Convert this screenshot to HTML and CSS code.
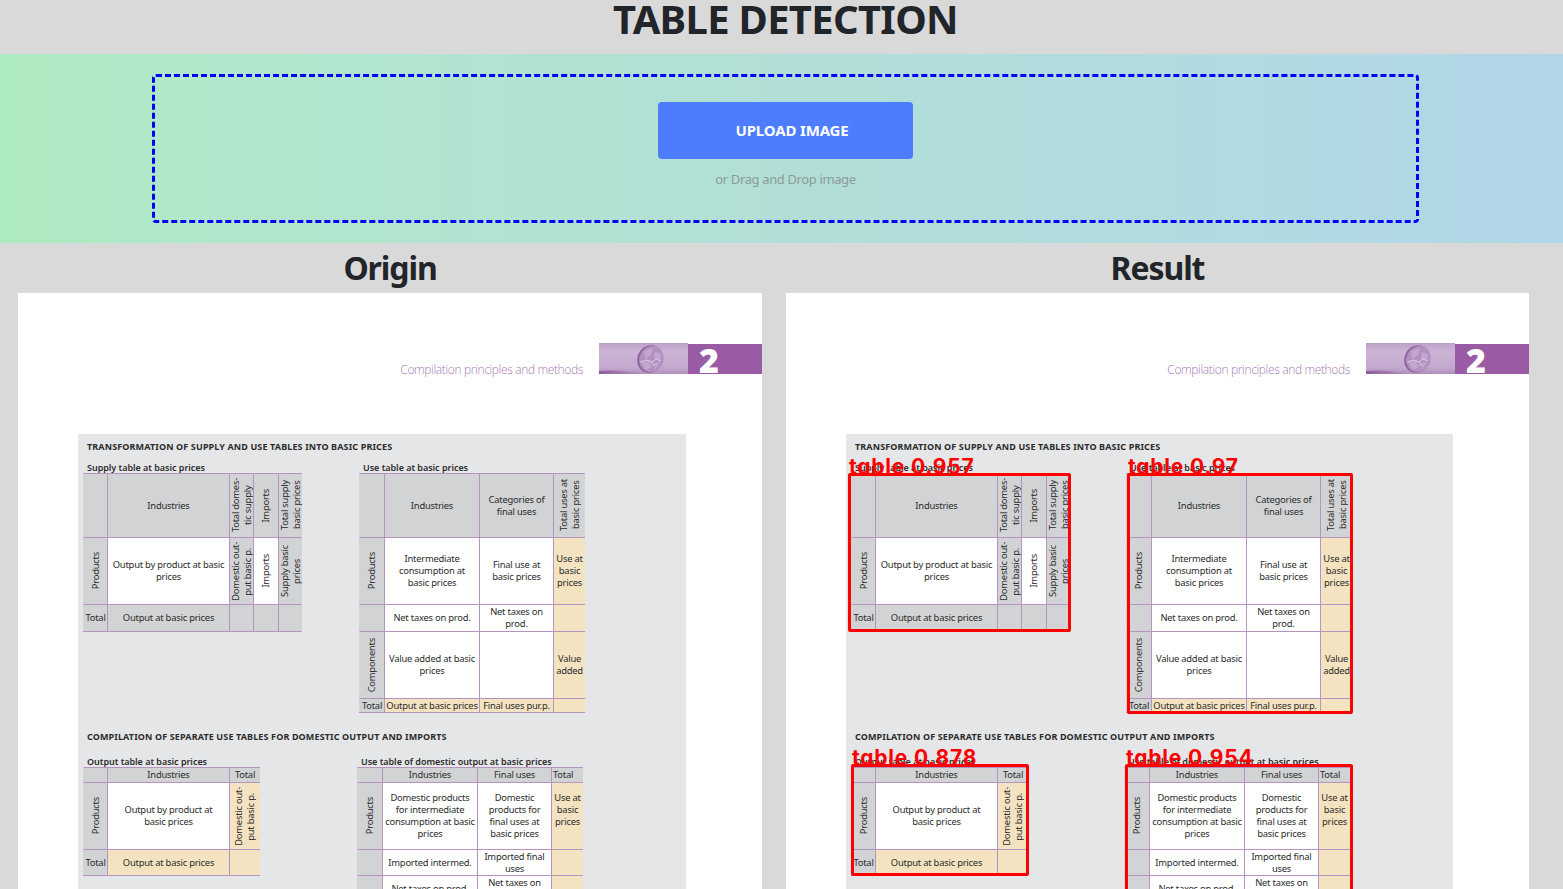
FILE: index.html
```html
<!DOCTYPE html>
<html lang="en">
<head>
<meta charset="utf-8">
<title>Table Detection</title>
<link rel="stylesheet" href="styles.css">
</head>
<body>
<h1 class="title">TABLE DETECTION</h1>
<section class="band">
  <div class="dropzone">
    <button class="upload" type="button">UPLOAD IMAGE</button>
    <p class="hint">or Drag and Drop image</p>
  </div>
</section>
<main class="panes">
  <section class="pane">
    <h2 class="pane-title">Origin</h2>
    <article class="sheet" id="origin">
      <header class="sheet-head">
        <span class="chapter">Compilation principles and methods</span>
        <svg class="coin" width="89" height="31" viewBox="0 0 89 31">
          <defs>
            <linearGradient id="bg" x1="0" y1="0" x2="0" y2="1"><stop offset="0" stop-color="#bda2c8"/><stop offset=".3" stop-color="#cbb5d5"/><stop offset=".8" stop-color="#c3a8ce"/><stop offset="1" stop-color="#b08fbd"/></linearGradient>
            <linearGradient id="sh" x1="0" y1="0" x2="1" y2="0"><stop offset="0" stop-color="#8c5d9c"/><stop offset="1" stop-color="#8c5d9c" stop-opacity="0"/></linearGradient>
          </defs>
          <rect width="89" height="31" fill="url(#bg)"/>
          <path d="M0 28Q22 26 42 31H0Z" fill="url(#sh)"/>
          <ellipse cx="51" cy="16" rx="12.6" ry="14" transform="rotate(25 51 16)" fill="#8d659f"/>
          <ellipse cx="52.5" cy="16" rx="12" ry="13.3" transform="rotate(25 52.5 16)" fill="#b291c0"/>
          <path d="M45 9q5-5 9-3l-2 6-6 4zM56 9l6 2-1 7-6-3zM42 19l8-1 3 6-6 3zM55 20l6-1-5 8z" fill="#c2a6ce"/>
          <path d="M41 19l7-2 5 2 4-3 5 2M53 19l2 4" fill="none" stroke="#dccbe4" stroke-width="1"/>
        </svg>
        <span class="number"><b class="digit">2</b></span>
      </header>
      <div class="content">
        <h3 class="heading h-one">TRANSFORMATION OF SUPPLY AND USE TABLES INTO BASIC PRICES</h3>
        <div class="tables first">
          <figure class="fig fig-a">
            <figcaption class="cap">Supply table at basic prices</figcaption>
            <div class="grid grid-a">
              <div class="c g"></div><div class="c g">Industries</div><div class="c g"><span class="v">Total domes-<br>tic supply</span></div><div class="c g"><span class="v">Imports</span></div><div class="c g"><span class="v">Total supply<br>basic prices</span></div>
              <div class="c g"><span class="v">Products</span></div><div class="c">Output by product at basic<br>prices</div><div class="c g"><span class="v">Domestic out-<br>put basic p.</span></div><div class="c"><span class="v">Imports</span></div><div class="c g"><span class="v">Supply basic<br>prices</span></div>
              <div class="c g">Total</div><div class="c g">Output at basic prices</div><div class="c g"></div><div class="c g"></div><div class="c g"></div>
            </div>
          </figure>
          <figure class="fig">
            <figcaption class="cap">Use table at basic prices</figcaption>
            <div class="grid grid-b">
              <div class="c g"></div><div class="c g">Industries</div><div class="c g">Categories of<br>final uses</div><div class="c g"><span class="v">Total uses at<br>basic prices</span></div>
              <div class="c g"><span class="v">Products</span></div><div class="c">Intermediate<br>consumption at<br>basic prices</div><div class="c">Final use at<br>basic prices</div><div class="c y">Use at<br>basic<br>prices</div>
              <div class="c g"></div><div class="c">Net taxes on prod.</div><div class="c">Net taxes on<br>prod.</div><div class="c y"></div>
              <div class="c g"><span class="v">Components</span></div><div class="c">Value added at basic<br>prices</div><div class="c"></div><div class="c y">Value<br>added</div>
              <div class="c g">Total</div><div class="c y">Output at basic prices</div><div class="c y">Final uses pur.p.</div><div class="c y"></div>
            </div>
          </figure>
        </div>
        <h3 class="heading h-two">COMPILATION OF SEPARATE USE TABLES FOR DOMESTIC OUTPUT AND IMPORTS</h3>
        <div class="tables second">
          <figure class="fig fig-c">
            <figcaption class="cap">Output table at basic prices</figcaption>
            <div class="grid grid-c">
              <div class="c g"></div><div class="c g">Industries</div><div class="c g">Total</div>
              <div class="c g"><span class="v">Products</span></div><div class="c">Output by product at<br>basic prices</div><div class="c y"><span class="v">Domestic out-<br>put basic p.</span></div>
              <div class="c g">Total</div><div class="c y">Output at basic prices</div><div class="c y"></div>
            </div>
          </figure>
          <figure class="fig">
            <figcaption class="cap">Use table of domestic output at basic prices</figcaption>
            <div class="grid grid-d">
              <div class="c g"></div><div class="c g">Industries</div><div class="c g">Final uses</div><div class="c g start">Total</div>
              <div class="c g"><span class="v">Products</span></div><div class="c">Domestic products<br>for intermediate<br>consumption at basic<br>prices</div><div class="c">Domestic<br>products for<br>final uses at<br>basic prices</div><div class="c y lift">Use at<br>basic<br>prices</div>
              <div class="c g"></div><div class="c">Imported intermed.</div><div class="c">Imported final<br>uses</div><div class="c y"></div>
              <div class="c g"></div><div class="c">Net taxes on prod.</div><div class="c">Net taxes on<br>prod.</div><div class="c y"></div>
            </div>
          </figure>
        </div>
      </div>
    </article>
  </section>
  <section class="pane">
    <h2 class="pane-title">Result</h2>
    <div class="result" id="result">
      <div class="box box-a"><span class="tag">table 0.957</span></div>
      <div class="box box-b"><span class="tag">table 0.97</span></div>
      <div class="box box-c"><span class="tag">table 0.878</span></div>
      <div class="box box-d"><span class="tag">table 0.954</span></div>
    </div>
  </section>
</main>
<script src="app.js"></script>
</body>
</html>
```
FILE: styles.css
```css
* { box-sizing: border-box; }
body {
  margin: 0;
  height: 889px;
  overflow: hidden;
  background: #d9d9d9;
  color: #212529;
  font-family: "Noto Sans", "Open Sans", sans-serif;
}
h1, h2, h3, p, figure { margin: 0; }
.title {
  height: 54px;
  padding-left: 8px;
  font-size: 40px;
  font-weight: 700;
  line-height: 38px;
  letter-spacing: -0.7px;
  text-align: center;
}
.band {
  height: 189px;
  padding: 20px 144px 20px 152px;
  background: linear-gradient(to right, #aeeac0, #b0e8ca 12%, #b1dfd7 50%, #b1d6e8);
}
.dropzone {
  display: flex;
  flex-direction: column;
  align-items: center;
  height: 149px;
  padding-top: 25px;
  border: 3px dashed #0000ff;
  border-radius: 4px;
}
.upload {
  width: 255px;
  height: 57px;
  padding: 0 0 1px 13px;
  border: 0;
  border-radius: 4px;
  background: #4d7cff;
  color: #fff;
  font: 700 15px "Noto Sans", sans-serif;
  letter-spacing: -0.15px;
}
.hint {
  margin-top: 10px;
  color: #8f9a98;
  font-size: 13px;
  line-height: 20px;
  letter-spacing: -0.37px;
}
.panes {
  display: grid;
  grid-template-columns: 744px 743px;
  gap: 24px;
  padding-left: 18px;
}
.pane-title {
  height: 50px;
  font-size: 32px;
  font-weight: 700;
  line-height: 49px;
  letter-spacing: -1.1px;
  text-align: center;
}
.sheet {
  height: 596px;
  padding-top: 50px;
  overflow: hidden;
  background: #fff;
  color: #2c2c2c;
  font-size: 9.4px;
  line-height: 12px;
}
.sheet-head {
  display: flex;
  justify-content: flex-end;
  height: 31px;
}
.chapter {
  margin: 17px 16px 0 0;
  color: #a878b4;
  font: 300 12px/20px "Open Sans", sans-serif;
  letter-spacing: -0.36px;
  white-space: nowrap;
}
.coin { display: block; }
.number {
  width: 74px;
  height: 30px;
  margin-top: 1px;
  padding-left: 11px;
  overflow: hidden;
  background: #9a5ba5;
  color: #fff;
}
.digit { display: block; font: 800 34px/32px "Open Sans", sans-serif; }
.content {
  width: 608px;
  height: 500px;
  margin: 60px 0 0 60px;
  padding: 6px 0 0 5px;
  background: #e5e6e8;
}
.result .content { width: 607px; }
.heading {
  padding-left: 4px;
  font-size: 9px;
  font-weight: 700;
  line-height: 14px;
  letter-spacing: 0.13px;
  white-space: nowrap;
}
.h-one { margin-bottom: 7px; }
.h-two { margin: 17px 0 11px; }
.tables { display: flex; }
.first { gap: 57px; height: 252px; align-items: flex-start; }
.second { gap: 97px; align-items: flex-start; }
.result .first { gap: 56px; }
.result .second { gap: 96px; }
.cap {
  height: 12px;
  padding-left: 4px;
  font-size: 9px;
  font-weight: 600;
  line-height: 14px;
  letter-spacing: -0.03px;
  white-space: nowrap;
}
.grid { display: grid; width: max-content; border-bottom: 1px solid #b594c0; }
.grid-a { grid-template: 64px 67px 27px / 24px 122px 24px 25px 24px; }
.grid-b { grid-template: 64px 67px 27px 67px 14px / 25px 95px 74px 32px; }
.grid-c { grid-template: 15px 67px 26px / 24px 122px 31px; }
.grid-d { grid-template: 15px 67px 26px 27px / 25px 95px 74px 32px; }
.c {
  display: flex;
  align-items: center;
  justify-content: center;
  min-width: 0;
  border-top: 1px solid #b594c0;
  border-left: 1px solid #b594c0;
  background: #fff;
  letter-spacing: -0.22px;
  text-align: center;
  white-space: nowrap;
}
.grid-a .c:nth-child(5n+1),
.grid-b .c:nth-child(4n+1),
.grid-c .c:nth-child(3n+1),
.grid-d .c:nth-child(4n+1) { border-left-color: transparent; }
.g { background: #d1d3d4; }
.y { background: #f4e3c1; }
.v { writing-mode: vertical-rl; transform: rotate(180deg); }
.start { justify-content: flex-start; padding-left: 1px; }
.lift { padding-bottom: 12px; }
.result { position: relative; }
.box {
  position: absolute;
  border: 3px solid #f00;
  border-radius: 2px;
}
.box-a { left: 62px; top: 180px; width: 223px; height: 159px; }
.box-b { left: 341px; top: 180px; width: 226px; height: 241px; }
.box-c { left: 65px; top: 471px; width: 178px; height: 112px; }
.box-d { left: 339px; top: 471px; width: 228px; height: 160px; }
.tag {
  position: absolute;
  left: -2px;
  bottom: 100%;
  margin-bottom: 1px;
  color: #f00;
  font: 700 21px/16px Inter, sans-serif;
  font-feature-settings: "cv11";
  letter-spacing: 0.8px;
  white-space: nowrap;
}
```
FILE: app.js
```js
// The result pane shows the same sheet under the detection boxes.
const sheet = document.getElementById("origin").cloneNode(true);
sheet.removeAttribute("id");
document.getElementById("result").prepend(sheet);
```
